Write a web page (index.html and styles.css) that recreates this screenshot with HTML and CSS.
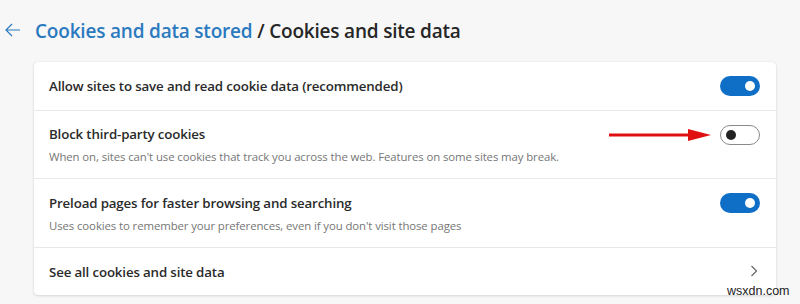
FILE: index.html
```html
<!DOCTYPE html>
<html>
<head>
<meta charset="utf-8">
<link rel="stylesheet" href="styles.css">
</head>
<body>
<div class="page">
  <div class="header">
    <svg class="back" width="16" height="14" viewBox="0 0 16 14"><path d="M7 1 L1 7 L7 13 M1 7 H15" fill="none" stroke="#2b7ac0" stroke-width="1.2"/></svg>
    <h1 class="title"><span class="crumb">Cookies and data stored</span> / Cookies and site data</h1>
  </div>
  <div class="card">
    <div class="row row-single">
      <div class="text"><div class="label">Allow sites to save and read cookie data (recommended)</div></div>
      <div class="toggle on"><span class="knob"></span></div>
    </div>
    <div class="row row-double">
      <div class="text">
        <div class="label">Block third-party cookies</div>
        <div class="desc">When on, sites can't use cookies that track you across the web. Features on some sites may break.</div>
      </div>
      <div class="toggle off"><span class="knob"></span></div>
      <svg class="redarrow" width="104" height="14" viewBox="0 0 104 14"><path d="M1 7 H84" stroke="#e01010" stroke-width="3"/><path d="M80 1 L103 7 L80 13 Z" fill="#e01010"/></svg>
    </div>
    <div class="row row-double row3">
      <div class="text">
        <div class="label">Preload pages for faster browsing and searching</div>
        <div class="desc">Uses cookies to remember your preferences, even if you don't visit those pages</div>
      </div>
      <div class="toggle on"><span class="knob"></span></div>
    </div>
    <div class="row row-single last">
      <div class="text"><div class="label">See all cookies and site data</div></div>
      <svg class="chev" width="8" height="12" viewBox="0 0 8 12"><path d="M1.5 1 L6.5 6 L1.5 11" fill="none" stroke="#666" stroke-width="1.2"/></svg>
    </div>
  </div>
  <div class="watermark">wsxdn.com</div>
</div>
</body>
</html>
```
FILE: styles.css
```css
html, body { margin: 0; padding: 0; }
body {
  background: #f7f7f7;
  font-family: "Open Sans", "Noto Sans", sans-serif;
  width: 800px;
  height: 304px;
  overflow: hidden;
}
.page { position: relative; padding: 16px 24px 0 4px; }
.header { display: flex; align-items: center; height: 30px; }
.back { margin-left: 1px; margin-right: 14px; margin-top: -3px; }
.title {
  margin: 0;
  font-size: 19px;
  font-weight: 600;
  color: #262626;
  letter-spacing: -0.2px;
}
.crumb { color: #2b7ac0; }
.card {
  margin: 16px 0 0 30px;
  width: 742px;
  background: #fff;
  border-radius: 4px;
  box-shadow: 0 0 1px rgba(0,0,0,0.15), 0 1px 3px rgba(0,0,0,0.12);
}
.row {
  position: relative;
  display: flex;
  align-items: center;
  padding: 0 16px 0 15px;
  border-bottom: 1px solid #e8e8e8;
}
.row.last { border-bottom: none; }
.row-single { height: 48px; }
.row-single.last { height: 47px; }
.row-double { height: 67px; }
.row3 { height: 68px; }
.text { flex: 1; }
.label {
  font-size: 13.3px;
  font-weight: 600;
  color: #2a2a2a;
  letter-spacing: -0.15px;
}
.desc {
  font-size: 11.4px;
  color: #767676;
  margin-top: 6px;
  letter-spacing: -0.1px;
}
.row-double .text { margin-top: 0; }
.toggle {
  width: 40px;
  height: 20px;
  border-radius: 10px;
  box-sizing: border-box;
  position: relative;
  flex: none;
}
.toggle.on { background: #0f6fc6; margin-top: 0; }
.row-double .toggle { align-self: flex-start; }
.row-double .toggle.off { margin-top: 14px; }
.row3 .toggle { margin-top: 14px; }
.toggle.off { background: #fff; border: 1px solid #8a8a8a; }
.knob {
  position: absolute;
  width: 10px;
  height: 10px;
  border-radius: 50%;
  top: 50%;
  margin-top: -5px;
}
.toggle.on .knob { background: #fff; right: 5px; }
.toggle.off .knob { background: #222; left: 5px; }
.redarrow { position: absolute; left: 574px; top: 17px; }
.chev { margin-right: 2px; margin-top: -2px; }
.watermark {
  position: absolute;
  left: 727px;
  top: 284px;
  font-family: "Liberation Sans", sans-serif;
  font-size: 12.5px;
  color: #222;
  background: transparent;
}
```
